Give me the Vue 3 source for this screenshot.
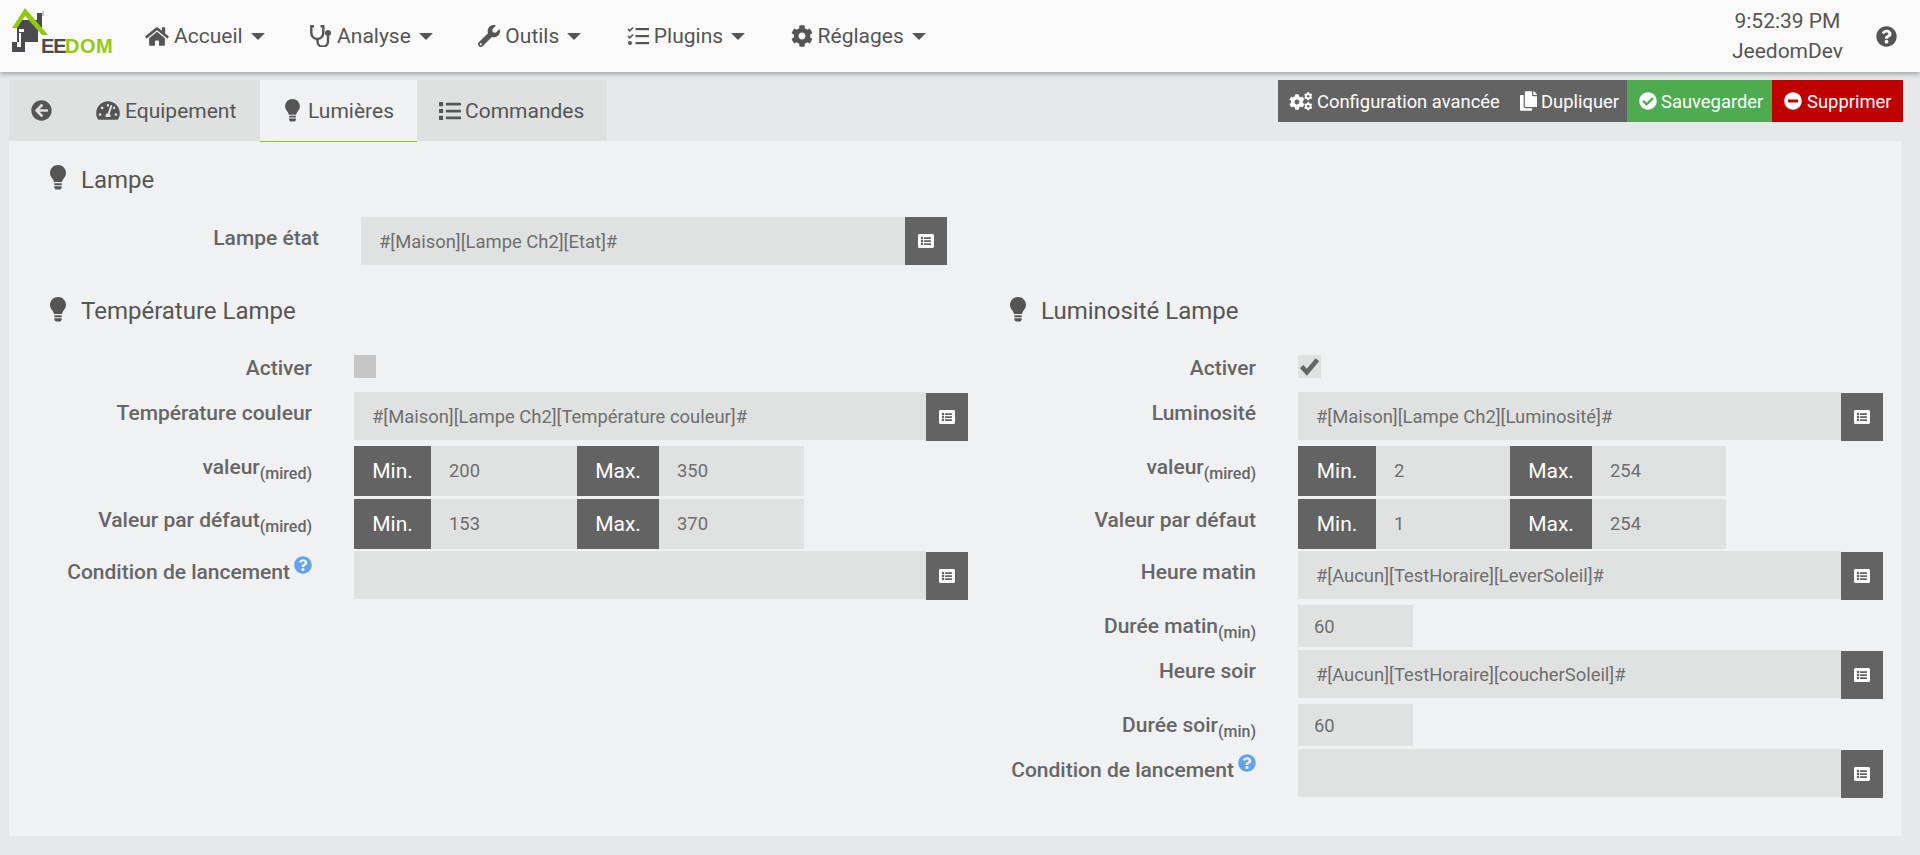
<script setup>
const cog = 'M487.4 315.7l-42.6-24.6c4.3-23.2 4.3-47 0-70.2l42.6-24.6c4.9-2.8 7.1-8.6 5.5-14-11.1-35.6-30-67.8-54.7-94.6-3.8-4.1-10-5.1-14.8-2.3L380.8 110c-17.9-15.4-38.5-27.3-60.8-35.1V25.8c0-5.6-3.9-10.5-9.4-11.7-36.7-8.2-74.3-7.8-109.2 0-5.5 1.2-9.4 6.1-9.4 11.7V75c-22.2 7.9-42.8 19.8-60.8 35.1L88.7 85.5c-4.9-2.8-11-1.9-14.8 2.3-24.7 26.7-43.6 58.9-54.7 94.6-1.7 5.4.6 11.2 5.5 14L67.3 221c-4.3 23.2-4.3 47 0 70.2l-42.6 24.6c-4.9 2.8-7.1 8.6-5.5 14 11.1 35.6 30 67.8 54.7 94.6 3.8 4.1 10 5.1 14.8 2.3l42.6-24.6c17.9 15.4 38.5 27.3 60.8 35.1v49.2c0 5.6 3.9 10.5 9.4 11.7 36.7 8.2 74.3 7.8 109.2 0 5.5-1.2 9.4-6.1 9.4-11.7v-49.2c22.2-7.9 42.8-19.8 60.8-35.1l42.6 24.6c4.9 2.8 11 1.9 14.8-2.3 24.7-26.7 43.6-58.9 54.7-94.6 1.5-5.5-.7-11.3-5.6-14.1zM256 336c-44.1 0-80-35.9-80-80s35.9-80 80-80 80 35.9 80 80-35.9 80-80 80z'
const home = 'M280.37 148.26L96 300.11V464a16 16 0 0 0 16 16l112.06-.29a16 16 0 0 0 15.92-16V368a16 16 0 0 1 16-16h64a16 16 0 0 1 16 16v95.64a16 16 0 0 0 16 16.05L464 480a16 16 0 0 0 16-16V300L295.67 148.26a12.19 12.19 0 0 0-15.3 0zM571.6 251.47L488 182.56V44.05a12 12 0 0 0-12-12h-56a12 12 0 0 0-12 12v72.61L318.47 43a48 48 0 0 0-61 0L4.34 251.47a12 12 0 0 0-1.6 16.9l25.5 31A12 12 0 0 0 45.15 301l235.22-193.74a12.19 12.19 0 0 1 15.3 0L530.9 301a12 12 0 0 0 16.9-1.6l25.5-31a12 12 0 0 0-1.7-16.93z'
const wrench = 'M507.73 109.1c-2.24-9.03-13.54-12.09-20.12-5.51l-74.36 74.36-67.88-11.31-11.31-67.88 74.36-74.36c6.62-6.62 3.43-17.9-5.66-20.16-47.38-11.74-99.55.91-136.58 37.93-39.64 39.64-50.55 97.1-34.05 147.2L18.74 402.76c-24.99 24.99-24.99 65.51 0 90.5 24.99 24.99 65.51 24.99 90.5 0l213.21-213.21c50.12 16.71 107.47 5.68 147.37-34.22 37.07-37.07 49.7-89.32 37.91-136.73zM64 472c-13.25 0-24-10.75-24-24 0-13.26 10.75-24 24-24s24 10.74 24 24c0 13.25-10.75 24-24 24z'
const help = 'M504 256c0 136.997-111.043 248-248 248S8 392.997 8 256C8 119.083 119.043 8 256 8s248 111.083 248 248zM262.655 90c-54.497 0-89.255 22.957-116.549 63.758-3.536 5.286-2.353 12.415 2.715 16.258l34.699 26.31c5.205 3.947 12.621 3.008 16.665-2.122 17.864-22.658 30.113-35.797 57.303-35.797 20.429 0 45.698 13.148 45.698 32.958 0 14.976-12.363 22.667-32.534 33.976C247.128 238.528 216 254.941 216 296v4c0 6.627 5.373 12 12 12h56c6.627 0 12-5.373 12-12v-1.333c0-28.462 83.186-29.647 83.186-106.667 0-58.002-60.165-102-116.531-102zM256 338c-25.365 0-46 20.635-46 46 0 25.364 20.635 46 46 46s46-20.636 46-46c0-25.365-20.635-46-46-46z'
const listAlt = 'M464 480H48c-26.51 0-48-21.49-48-48V80c0-26.51 21.49-48 48-48h416c26.51 0 48 21.49 48 48v352c0 26.51-21.49 48-48 48zM128 120c-22.091 0-40 17.909-40 40s17.909 40 40 40 40-17.909 40-40-17.909-40-40-40zm0 96c-22.091 0-40 17.909-40 40s17.909 40 40 40 40-17.909 40-40-17.909-40-40-40zm0 96c-22.091 0-40 17.909-40 40s17.909 40 40 40 40-17.909 40-40-17.909-40-40-40zm288-136v-32c0-6.627-5.373-12-12-12H204c-6.627 0-12 5.373-12 12v32c0 6.627 5.373 12 12 12h200c6.627 0 12-5.373 12-12zm0 96v-32c0-6.627-5.373-12-12-12H204c-6.627 0-12 5.373-12 12v32c0 6.627 5.373 12 12 12h200c6.627 0 12-5.373 12-12zm0 96v-32c0-6.627-5.373-12-12-12H204c-6.627 0-12 5.373-12 12v32c0 6.627 5.373 12 12 12h200c6.627 0 12-5.373 12-12z'
const bulb = 'M8 0C3.6 0 0 3.5 0 7.8c0 2.2.9 3.8 2 5.3 1 1.4 1.8 2.6 2 4h8c.2-1.400 1-2.600 2-4 1.100-1.500 2-3.100 2-5.300C16 3.500 12.400 0 8 0zM4.300 18.300h7.400v1.900H4.300zM4.300 21.200h7.400v1.500L10.400 24.500H5.600L4.300 22.700z'

const menu = [
  { id: 'home', label: 'Accueil' },
  { id: 'steth', label: 'Analyse' },
  { id: 'wrench', label: 'Outils' },
  { id: 'tasks', label: 'Plugins' },
  { id: 'cog', label: 'Réglages' }
]

const left = [
  { type: 'check', label: 'Activer', checked: false, gap: 0 },
  { type: 'select', label: 'Température couleur', value: '#[Maison][Lampe Ch2][Température couleur]#', gap: 14 },
  { type: 'pair', label: 'valeur', sub: '(mired)', min: '200', max: '350', gap: 6 },
  { type: 'pair', label: 'Valeur par défaut', sub: '(mired)', min: '153', max: '370', gap: 5 },
  { type: 'select', label: 'Condition de lancement', hint: true, value: '', gap: 4 }
]
const right = [
  { type: 'check', label: 'Activer', checked: true, gap: 0 },
  { type: 'select', label: 'Luminosité', value: '#[Maison][Lampe Ch2][Luminosité]#', gap: 14 },
  { type: 'pair', label: 'valeur', sub: '(mired)', min: '2', max: '254', gap: 6 },
  { type: 'pair', label: 'Valeur par défaut', min: '1', max: '254', gap: 5 },
  { type: 'select', label: 'Heure matin', value: '#[Aucun][TestHoraire][LeverSoleil]#', gap: 4 },
  { type: 'short', label: 'Durée matin', sub: '(min)', value: '60', gap: 6 },
  { type: 'select', label: 'Heure soir', value: '#[Aucun][TestHoraire][coucherSoleil]#', gap: 3 },
  { type: 'short', label: 'Durée soir', sub: '(min)', value: '60', gap: 6 },
  { type: 'select', label: 'Condition de lancement', hint: true, value: '', gap: 3 }
]
const columns = [
  { cls: 'col-left', title: 'Température Lampe', rows: left },
  { cls: 'col-right', title: 'Luminosité Lampe', rows: right }
]
</script>

<template>
  <div class="page">
    <header class="nav">
      <svg class="logo" viewBox="0 0 102 46" width="102" height="46">
        <path d="M6 12 L27 12 L27 34 L6 34 Z" fill="#4b4b4f" />
        <rect x="26" y="5" width="5" height="16" fill="#4b4b4f" />
        <rect x="31" y="3" width="2" height="5" fill="#c9c9c9" />
        <path d="M1 20 L14 0 L37 27 L31 27 L14 8 L6 20 Z" fill="#93c90e" />
        <rect x="8" y="21" width="5" height="3" fill="#fafafa" />
        <rect x="8" y="25" width="5" height="13" fill="#fafafa" />
        <path d="M10 25 H14 V44 H1 V34 H6 V39 H10 Z" fill="#4b4b4f" />
        <text x="30" y="45" class="logo-ee">EE</text>
        <text x="54" y="45" class="logo-dom">DOM</text>
      </svg>
      <nav class="menu">
        <a v-for="m in menu" :key="m.id" class="menu-item">
          <svg v-if="m.id === 'home'" class="mi" width="24" height="21" viewBox="0 0 576 512"><path :d="home" /></svg>
          <svg v-else-if="m.id === 'steth'" class="mi" width="22" height="22" viewBox="0 0 22 22"><path d="M4 1.300H1.300V8a6 6 0 0 0 12 0V1.300H10.500" fill="none" stroke="currentColor" stroke-width="2.400" /><path d="M7.500 14v2.500a5 5 0 0 0 10.500 0V11" fill="none" stroke="currentColor" stroke-width="2.400" /><circle cx="18" cy="8" r="3" /></svg>
          <svg v-else-if="m.id === 'wrench'" class="mi" width="22" height="22" viewBox="0 0 512 512"><path :d="wrench" /></svg>
          <svg v-else-if="m.id === 'tasks'" class="mi" width="22" height="20" viewBox="0 0 22 20"><path d="M1 3l1.800 1.800L6 1.500M1 10l1.800 1.800L6 8.500" fill="none" stroke="currentColor" stroke-width="1.700" /><circle cx="3" cy="17" r="2" /><rect x="8.500" y="2" width="13.500" height="2.200" /><rect x="8.500" y="9" width="13.500" height="2.200" /><rect x="8.500" y="16" width="13.500" height="2.200" /></svg>
          <svg v-else class="mi" width="22" height="22" viewBox="0 0 512 512"><path :d="cog" /></svg>
          <span>{{ m.label }}</span>
          <i class="caret"></i>
        </a>
      </nav>
      <div class="status">
        <span>9:52:39 PM</span>
        <span>JeedomDev</span>
      </div>
      <svg class="nav-help" width="21" height="21" viewBox="0 0 512 512"><path :d="help" /></svg>
    </header>

    <main class="main">
      <div class="top">
        <div class="tabs">
          <a class="tab tab-back">
            <svg width="21" height="21" viewBox="0 0 512 512"><path d="M256 504C119 504 8 393 8 256S119 8 256 8s248 111 248 248-111 248-248 248zm28.900-143.600L209.400 288H392c13.300 0 24-10.700 24-24v-16c0-13.300-10.700-24-24-24H209.400l75.500-72.400c9.700-9.300 9.900-24.800.4-34.300l-11-10.900c-9.400-9.400-24.600-9.400-33.900 0L107.700 239c-9.400 9.400-9.400 24.600 0 33.900l132.700 132.700c9.400 9.400 24.600 9.400 33.900 0l11-10.900c9.500-9.500 9.300-25-.4-34.300z" /></svg>
          </a>
          <a class="tab tab-equip">
            <svg width="24" height="21" viewBox="0 0 576 512"><path d="M288 32C128.940 32 0 160.940 0 320c0 52.800 14.250 102.260 39.060 144.800 5.610 9.620 16.300 15.200 27.440 15.200h443c11.140 0 21.830-5.580 27.440-15.200C561.750 422.260 576 372.800 576 320c0-159.060-128.940-288-288-288zm0 64c14.710 0 26.580 10.130 30.320 23.650-1.110 2.260-2.640 4.230-3.450 6.670l-9.220 27.670c-5.130 3.490-10.970 6.010-17.640 6.010-17.670 0-32-14.330-32-32S270.330 96 288 96zM96 384c-17.670 0-32-14.330-32-32s14.330-32 32-32 32 14.330 32 32-14.330 32-32 32zm48-160c-17.670 0-32-14.330-32-32s14.330-32 32-32 32 14.330 32 32-14.330 32-32 32zm246.770-72.410l-61.330 184C343.130 347.330 352 364.540 352 384c0 11.720-3.380 22.550-8.880 32H232.880c-5.500-9.450-8.880-20.280-8.880-32 0-33.940 26.500-61.430 59.900-63.590l61.340-184.010c4.170-12.560 17.730-19.450 30.360-15.170 12.570 4.190 19.350 17.790 15.170 30.360zm14.660 57.200l15.520-46.550c3.470-1.290 7.130-2.230 11.050-2.230 17.670 0 32 14.330 32 32s-14.330 32-32 32c-11.380-.01-20.890-6.280-26.570-15.220zM480 384c-17.670 0-32-14.330-32-32s14.330-32 32-32 32 14.330 32 32-14.330 32-32 32z" /></svg>
            <span>Equipement</span>
          </a>
          <a class="tab tab-active">
            <svg width="15" height="23" viewBox="0 0 16 25"><path :d="bulb" /></svg>
            <span>Lumières</span>
          </a>
          <a class="tab tab-cmd">
            <svg width="22" height="22" viewBox="0 0 512 512"><path d="M80 368H16a16 16 0 0 0-16 16v64a16 16 0 0 0 16 16h64a16 16 0 0 0 16-16v-64a16 16 0 0 0-16-16zm0-320H16A16 16 0 0 0 0 64v64a16 16 0 0 0 16 16h64a16 16 0 0 0 16-16V64a16 16 0 0 0-16-16zm0 160H16a16 16 0 0 0-16 16v64a16 16 0 0 0 16 16h64a16 16 0 0 0 16-16v-64a16 16 0 0 0-16-16zm416 176H176a16 16 0 0 0-16 16v32a16 16 0 0 0 16 16h320a16 16 0 0 0 16-16v-32a16 16 0 0 0-16-16zm0-320H176a16 16 0 0 0-16 16v32a16 16 0 0 0 16 16h320a16 16 0 0 0 16-16V80a16 16 0 0 0-16-16zm0 160H176a16 16 0 0 0-16 16v32a16 16 0 0 0 16 16h320a16 16 0 0 0 16-16v-32a16 16 0 0 0-16-16z" /></svg>
            <span>Commandes</span>
          </a>
        </div>
        <div class="actions">
          <a class="act act-dark act-config">
            <svg width="24" height="20" viewBox="0 0 24 20">
              <g transform="translate(0 3) scale(.031)"><path :d="cog" /></g>
              <g transform="translate(15 1) scale(.0165)"><path :d="cog" /></g>
              <g transform="translate(15 11) scale(.0165)"><path :d="cog" /></g>
            </svg>
            <span>Configuration avancée</span>
          </a>
          <a class="act act-dark act-dup">
            <svg width="17" height="20" viewBox="0 0 448 512"><path d="M320 448v40c0 13.255-10.745 24-24 24H24c-13.255 0-24-10.745-24-24V120c0-13.255 10.745-24 24-24h72v296c0 30.879 25.121 56 56 56h168zm0-344V0H152c-13.255 0-24 10.745-24 24v368c0 13.255 10.745 24 24 24h272c13.255 0 24-10.745 24-24V128H344c-13.200 0-24-10.800-24-24zm120.971-31.029L375.029 7.029A24 24 0 0 0 358.059 0H352v96h96v-6.059a24 24 0 0 0-7.029-16.970z" /></svg>
            <span>Dupliquer</span>
          </a>
          <a class="act act-green">
            <svg width="18" height="18" viewBox="0 0 512 512"><path d="M504 256c0 136.967-111.033 248-248 248S8 392.967 8 256 119.033 8 256 8s248 111.033 248 248zM227.314 387.314l184-184c6.248-6.248 6.248-16.379 0-22.627l-22.627-22.627c-6.248-6.249-16.379-6.249-22.628 0L216 308.118l-70.059-70.059c-6.248-6.248-16.379-6.248-22.628 0l-22.627 22.627c-6.248 6.248-6.248 16.379 0 22.627l104 104c6.249 6.249 16.379 6.249 22.628.001z" /></svg>
            <span>Sauvegarder</span>
          </a>
          <a class="act act-red">
            <svg width="18" height="18" viewBox="0 0 512 512"><path d="M256 8C119 8 8 119 8 256s111 248 248 248 248-111 248-248S393 8 256 8zM124 296c-6.600 0-12-5.400-12-12v-56c0-6.600 5.400-12 12-12h264c6.600 0 12 5.400 12 12v56c0 6.600-5.400 12-12 12H124z" /></svg>
            <span>Supprimer</span>
          </a>
        </div>
      </div>

      <section class="panel">
        <h3 class="title title-first">
          <svg width="16" height="25" viewBox="0 0 16 25"><path :d="bulb" /></svg>
          <span>Lampe</span>
        </h3>
        <div class="row row-lamp">
          <div class="label label-lamp">Lampe état</div>
          <div class="select select-lamp">
            <div class="field">#[Maison][Lampe Ch2][Etat]#</div>
            <button class="list-btn"><svg width="16" height="16" viewBox="0 0 512 512"><path :d="listAlt" /></svg></button>
          </div>
        </div>

        <div class="columns">
          <div v-for="c in columns" :key="c.cls" :class="['col', c.cls]">
            <h3 class="title">
              <svg width="16" height="25" viewBox="0 0 16 25"><path :d="bulb" /></svg>
              <span>{{ c.title }}</span>
            </h3>
            <div class="rows">
              <div v-for="(r, i) in c.rows" :key="i" :class="['row', 'gap-' + r.gap]">
                <div :class="['label', 'label-' + r.type]">
                  <span>{{ r.label }}</span><sub v-if="r.sub">{{ r.sub }}</sub>
                  <svg v-if="r.hint" class="hint" width="18" height="18" viewBox="0 0 512 512"><path :d="help" /></svg>
                </div>
                <div v-if="r.type === 'check'" :class="['check', { on: r.checked }]">
                  <svg v-if="r.checked" width="21" height="19" viewBox="0 0 20 18"><path d="M2.500 9l5 5.500L17.500 2.500" fill="none" stroke="#666" stroke-width="4.400" /></svg>
                </div>
                <div v-else-if="r.type === 'select'" class="select">
                  <div class="field">{{ r.value }}</div>
                  <button class="list-btn"><svg width="16" height="16" viewBox="0 0 512 512"><path :d="listAlt" /></svg></button>
                </div>
                <div v-else-if="r.type === 'pair'" class="pair">
                  <div class="addon">Min.</div>
                  <div class="num">{{ r.min }}</div>
                  <div class="addon">Max.</div>
                  <div class="num">{{ r.max }}</div>
                </div>
                <div v-else class="short">{{ r.value }}</div>
              </div>
            </div>
          </div>
        </div>
      </section>
    </main>
  </div>
</template>

<style>
html, body { margin: 0; background: #e7e8ea; }
</style>

<style scoped>
.page { height: 855px; overflow: hidden; background: #e7e8ea; font-family: Roboto, "Liberation Sans", sans-serif; color: #555; }
svg { fill: currentColor; display: block; flex: none; }

.nav { position: relative; height: 72px; background: #fafafa; box-shadow: 0 2px 5px rgba(0,0,0,.3); display: flex; align-items: center; }
.logo { margin: 8px 0 0 11px; align-self: flex-start; overflow: visible; }
.logo-ee, .logo-dom { font: bold 20px "Liberation Sans", sans-serif; }
.logo-ee { fill: #4b4b4f; letter-spacing: -1px; }
.logo-dom { fill: #93c90e; letter-spacing: .5px; }
.menu { display: flex; margin-left: 32px; gap: 45.5px; }
.menu-item { display: flex; align-items: center; gap: 5px; font-size: 21px; }
.caret { width: 0; height: 0; border-left: 7px solid transparent; border-right: 7px solid transparent; border-top: 7px solid #555; margin-left: 3px; }
.status { margin-left: auto; display: flex; flex-direction: column; align-items: center; font-size: 21px; line-height: 30px; margin-right: 33px; }
.nav-help { margin-right: 23px; }

.main { padding: 8px 17px 0 9px; }
.top { display: flex; justify-content: space-between; align-items: flex-start; }
.tabs { display: flex; height: 61px; background: #dfe1e0; }
.tab { display: flex; align-items: center; gap: 6px; font-size: 21px; box-sizing: border-box; height: 61px; }
.tab-back { padding: 0 13px 0 22px; width: 56px; }
.tab-equip { padding-left: 31px; width: 195px; gap: 5px; }
.tab-active { width: 157px; padding-left: 25px; gap: 8px; background: #f0f1f3; border-bottom: 1px solid #93ca02; height: 62px; }
.tab-cmd { width: 190px; padding-left: 22px; gap: 4px; }

.actions { display: flex; height: 42px; color: #fff; font-size: 18.4px; }
.act { display: flex; align-items: center; box-sizing: border-box; }
.act-dark { background: #636363; }
.act-config { padding-left: 11px; width: 242px; gap: 4px; }
.act-dup { width: 107px; gap: 4px; }
.act-green { background: #4fab50; width: 145px; padding-left: 12px; gap: 4px; }
.act-red { background: #be0000; width: 131px; padding-left: 12px; gap: 5px; }

.panel { height: 695px; margin-right: 2px; background: #f0f1f3; box-sizing: border-box; padding: 0 18px 0 41px; }
.title { margin: 0; display: flex; align-items: flex-start; gap: 15px; height: 25px; font-size: 24px; font-weight: 400; }
.title span { line-height: 30px; }
.columns .title span { line-height: 28px; }
.title-first { padding-top: 24px; }
.label { font-size: 21px; font-weight: 500; line-height: 24px; text-align: right; color: #666; padding-top: 9px; box-sizing: border-box; display: flex; justify-content: flex-end; align-items: flex-start; white-space: nowrap; }
.label sub { font-size: 16px; font-weight: 500; line-height: 1; margin-top: 11px; }
.label-check { padding-top: 1px; height: 23px; }
.hint { color: #63a3ea; margin: -4px 0 0 4px; }

.row { display: flex; gap: 42px; align-items: flex-start; }
.row-lamp { margin-top: 27px; }
.label-lamp { width: 269px; }
.select { display: flex; flex: 1; height: 48px; }
.select-lamp { flex: none; width: 586px; }
.field { flex: 1; height: 48px; line-height: 50px; background: #e0e2e1; font-size: 18.4px; color: #6e6e6e; padding-left: 18px; box-sizing: border-box; }
.list-btn { width: 42px; height: 48px; margin-top: 1px; border: 0; padding: 0; background: #636363; color: #fff; display: flex; align-items: center; justify-content: center; }
.select-lamp .list-btn { margin-top: 0; }

.columns { display: flex; gap: 42px; margin-top: 32px; }
.col { box-sizing: border-box; }
.col-left { width: 918px; }
.col-right { width: 873px; }
.col-left .label { width: 262px; }
.col-right .label { width: 246px; }
.rows { margin-top: 33px; }
.gap-3 { margin-top: 3px; }
.gap-4 { margin-top: 4px; }
.gap-5 { margin-top: 5px; }
.gap-6 { margin-top: 6px; }
.gap-14 { margin-top: 14px; }

.check { width: 22px; height: 23px; background: #c6c6c6; display: flex; align-items: center; justify-content: center; }
.check.on { background: #e0e2e1; width: 23px; }

.pair { display: grid; height: 48px; line-height: 50px; font-size: 18.4px; }
.col-left .pair { grid-template-columns: 77px 146px 82px 145px; }
.col-right .pair { grid-template-columns: 78px 134px 82px 134px; }
.addon { background: #636363; color: #fff; font-size: 21px; text-align: center; }
.num { background: #e0e2e1; color: #6e6e6e; padding-left: 18px; }
.short { width: 115px; height: 42px; line-height: 44px; background: #e0e2e1; color: #6e6e6e; font-size: 18.4px; padding-left: 16px; box-sizing: border-box; }
</style>
